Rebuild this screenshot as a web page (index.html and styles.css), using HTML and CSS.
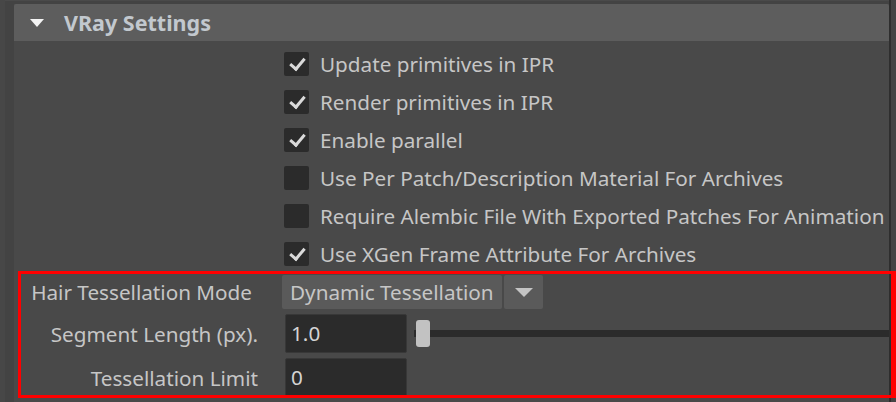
FILE: index.html
```html
<!DOCTYPE html>
<html lang="en">
<head>
    <meta charset="UTF-8">
    <title>VRay Settings</title>
    <link rel="stylesheet" href="styles.css">
</head>
<body>
    <div class="window">
        <div class="gutter"></div>
        <div class="frame">
            <div class="section">
                <div class="section-header">
                    <span class="caret"></span>
                    <span class="section-title">VRay Settings</span>
                </div>

                <div class="checks">
                    <label class="check-row"><span class="box checked"></span>Update primitives in IPR</label>
                    <label class="check-row"><span class="box checked"></span>Render primitives in IPR</label>
                    <label class="check-row"><span class="box checked"></span>Enable parallel</label>
                    <label class="check-row"><span class="box"></span>Use Per Patch/Description Material For Archives</label>
                    <label class="check-row"><span class="box"></span>Require Alembic File With Exported Patches For Animation</label>
                    <label class="check-row"><span class="box checked"></span>Use XGen Frame Attribute For Archives</label>
                </div>

                <div class="attrs">
                    <div class="attr-row">
                        <span class="attr-label label-mode">Hair Tessellation Mode</span>
                        <div class="dropdown">
                            <span class="dropdown-value">Dynamic Tessellation</span>
                            <span class="dropdown-btn"><span class="arrow"></span></span>
                        </div>
                    </div>
                    <div class="attr-row">
                        <span class="attr-label">Segment Length (px).</span>
                        <div class="field">1.0</div>
                        <div class="slider">
                            <div class="track"></div>
                            <div class="handle"></div>
                        </div>
                    </div>
                    <div class="attr-row">
                        <span class="attr-label">Tessellation Limit</span>
                        <div class="field">0</div>
                    </div>
                </div>
            </div>
        </div>
        <div class="scrollbar"></div>
        <div class="highlight"></div>
    </div>
</body>
</html>
```

FILE: styles.css
```css
:root {
    --bg: #494949;
    --header: #5d5d5d;
    --field: #2b2b2b;
    --text: #c6c6c6;
}

body {
    margin: 0;
    background-color: #464646;
    font-family: "Noto Sans", "Open Sans", sans-serif;
    color: var(--text);
}

.window {
    position: relative;
    display: flex;
    height: 402px;
    overflow: hidden;
}

.gutter {
    width: 5px;
    flex-shrink: 0;
    background-color: #474747;
}

.frame {
    flex: 1;
    min-width: 0;
    display: flex;
    background-color: #434343;
    padding: 3px 0 0 9px;
    border-top: 1px solid #4a4a4a;
}

.section {
    flex: 1;
    min-width: 0;
    background-color: var(--bg);
}

.section-header {
    height: 37px;
    display: flex;
    align-items: center;
    background-color: var(--header);
    border-radius: 2px 2px 0 0;
    padding-left: 16px;
    gap: 20px;
}

.caret {
    width: 0;
    height: 0;
    border-left: 7px solid transparent;
    border-right: 7px solid transparent;
    border-top: 8px solid #f4f4f4;
}

.section-title {
    font-size: 21.5px;
    font-weight: bold;
    color: #c2c8ce;
}

/* checkbox list */
.checks {
    padding: 4px 0 0 270px;
}

.check-row {
    height: 38px;
    display: flex;
    align-items: center;
    gap: 11px;
    font-size: 20.7px;
    white-space: nowrap;
}

.box {
    position: relative;
    width: 25px;
    height: 24px;
    border-radius: 2px;
    background-color: var(--field);
    flex-shrink: 0;
}

.box.checked::after {
    content: "";
    position: absolute;
    left: 6px;
    top: 3px;
    width: 6px;
    height: 12px;
    border-right: 3px solid #dadada;
    border-bottom: 3px solid #dadada;
    transform: translate(3px, 0) rotate(40deg);
}

/* attribute rows */
.attrs {
    padding-top: 2px;
    display: flex;
    flex-direction: column;
    gap: 5px;
}

.attr-row {
    display: flex;
    align-items: center;
    font-size: 20.7px;
    white-space: nowrap;
}

.attr-label {
    width: 244px;
    text-align: right;
    flex-shrink: 0;
}

.label-mode {
    padding-right: 6px;
    box-sizing: border-box;
}

.dropdown {
    display: flex;
    gap: 2px;
    height: 34px;
    margin-left: 24px;
    flex-shrink: 0;
}

.dropdown-value {
    width: 212px;
    overflow: hidden;
    background-color: #5a5a5a;
    border-radius: 2px;
    padding-left: 8px;
    line-height: 34px;
}

.dropdown-btn {
    width: 39px;
    background-color: #5a5a5a;
    border-radius: 2px;
    display: flex;
    align-items: center;
    justify-content: center;
}

.arrow {
    width: 0;
    height: 0;
    border-left: 9px solid transparent;
    border-right: 9px solid transparent;
    border-top: 9px solid #c4c4c4;
}

.field {
    width: 122px;
    height: 39px;
    flex-shrink: 0;
    box-sizing: border-box;
    margin-left: 27px;
    padding-left: 5px;
    line-height: 37px;
    background-color: var(--field);
    border: 1px solid #383838;
    border-radius: 2px;
    color: #d4d4d4;
}

.slider {
    position: relative;
    flex: 1;
    height: 27px;
    margin-left: 7px;
    display: flex;
    align-items: center;
}

.track {
    flex: 1;
    height: 7px;
    background-color: var(--field);
}

.handle {
    position: absolute;
    left: 2px;
    top: 0;
    width: 14px;
    height: 27px;
    border-radius: 3px;
    background-color: #c2c2c2;
}

.scrollbar {
    width: 5px;
    flex-shrink: 0;
    border-left: 2px solid #2e2e2e;
    background-color: #444444;
}

.highlight {
    position: absolute;
    left: 18px;
    top: 271px;
    right: 0;
    height: 127px;
    box-sizing: border-box;
    border: 3px solid #ff0000;
    border-right-width: 5px;
    pointer-events: none;
}
```
